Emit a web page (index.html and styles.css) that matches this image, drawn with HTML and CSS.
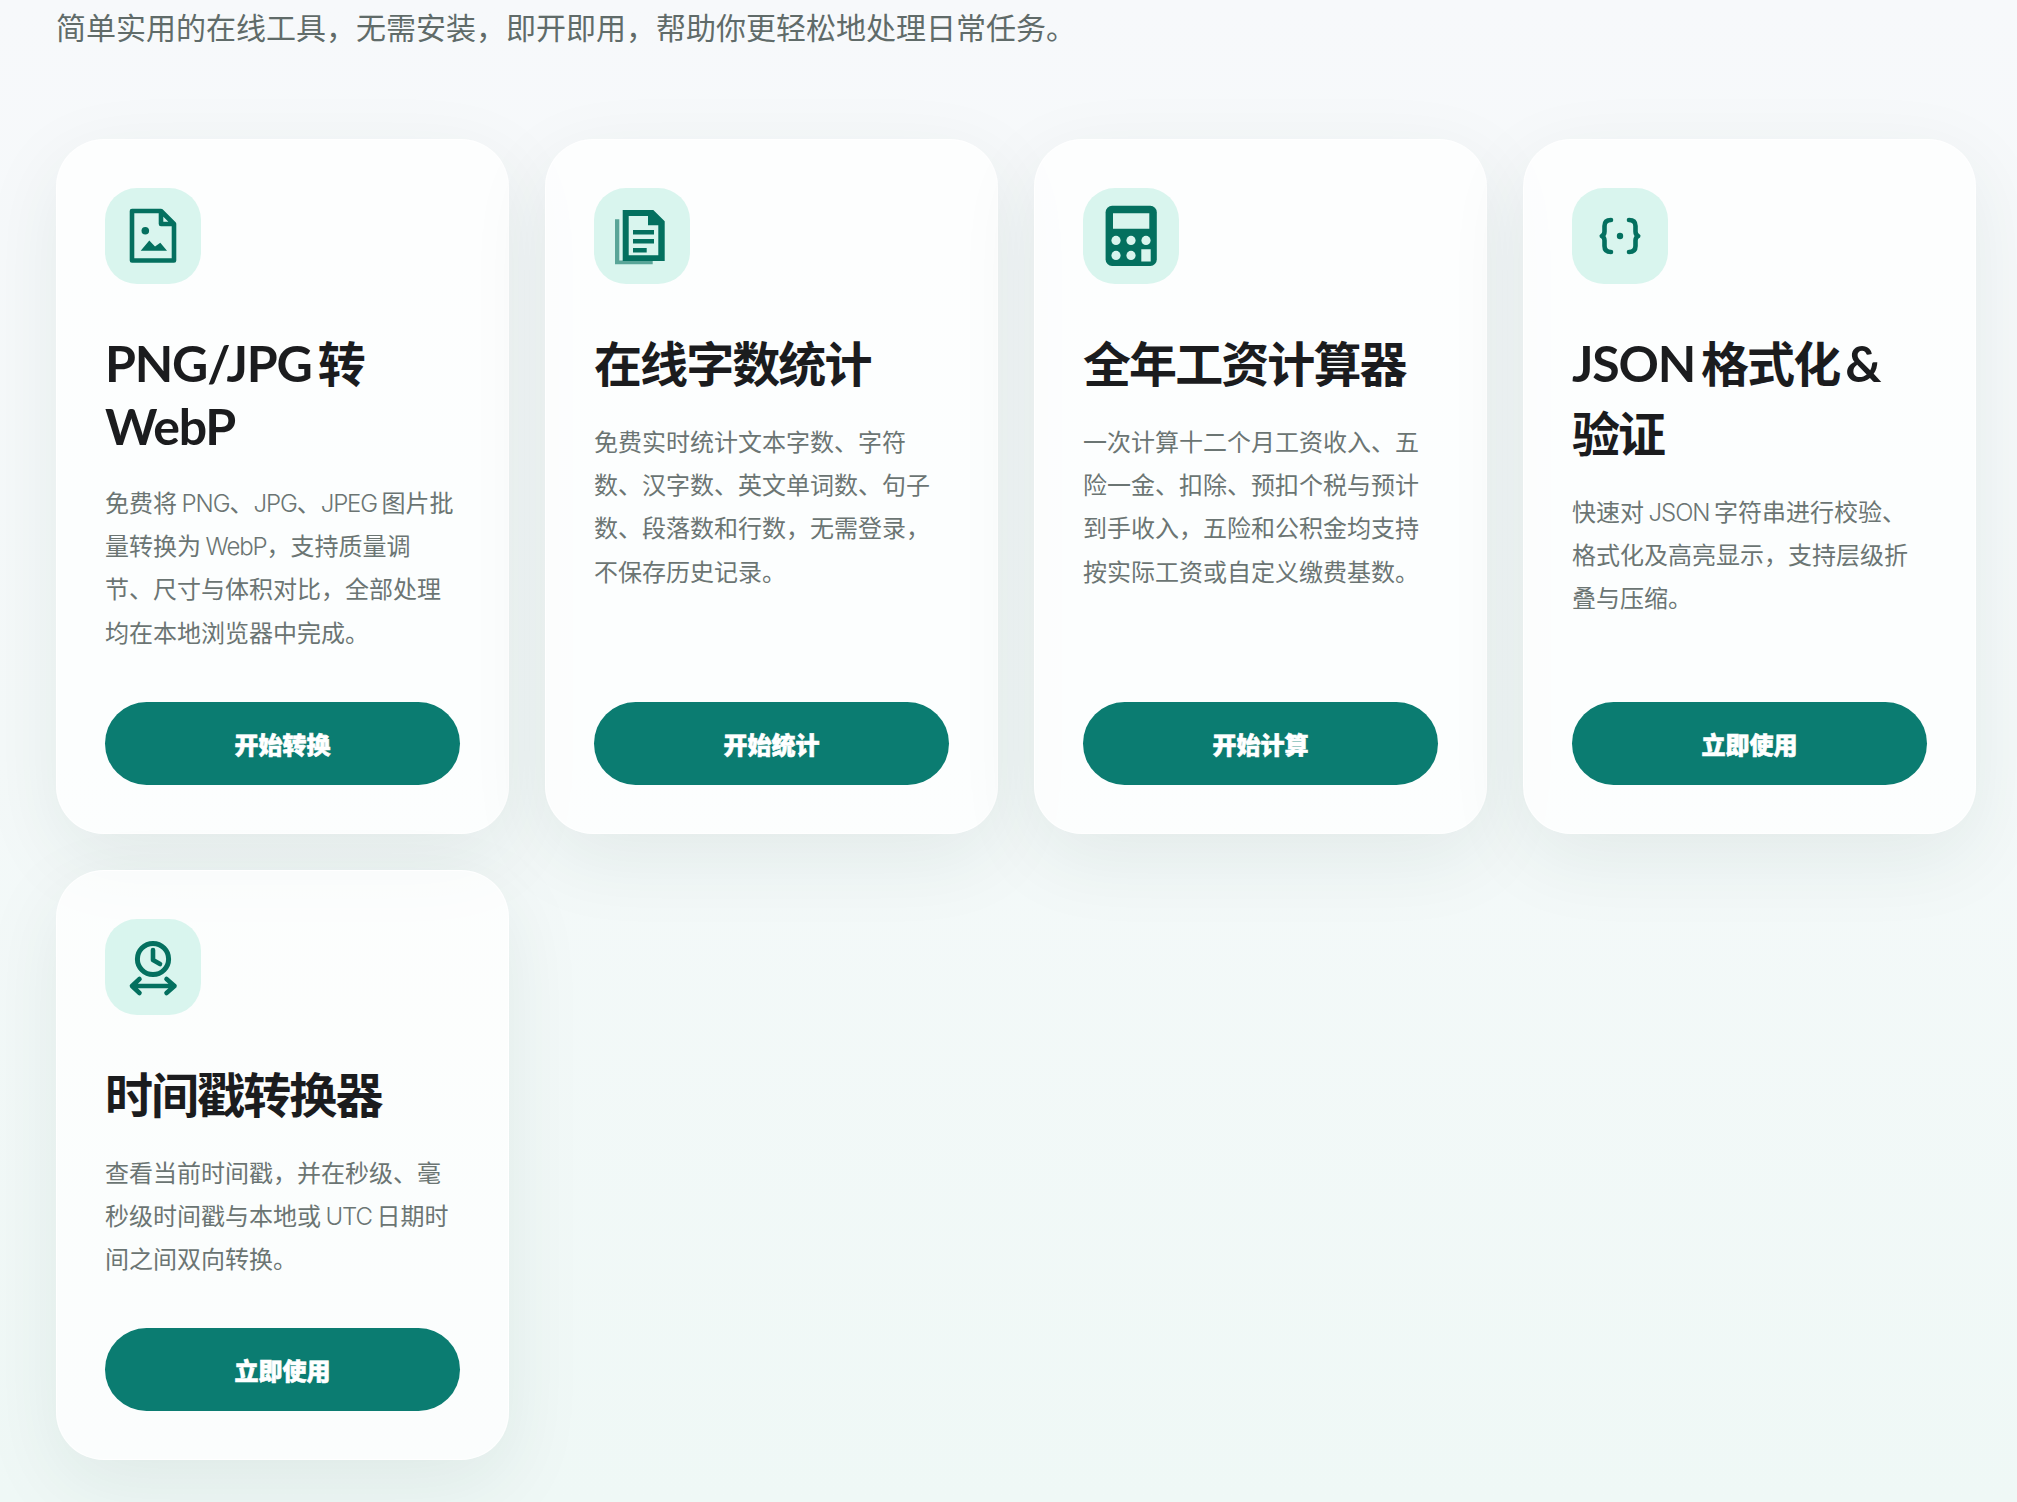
FILE: index.html
```html
<!DOCTYPE html>
<html lang="zh-CN">
<head>
  <meta charset="UTF-8" />
  <meta name="viewport" content="width=device-width, initial-scale=1.0" />
  <title>在线工具</title>
  <link rel="stylesheet" href="styles.css">
</head>
<body>

<main class="container">
  <p class="intro">简单实用的在线工具，无需安装，即开即用，帮助你更轻松地处理日常任务。</p>

  <div class="tools">
    <!-- ===== WebP ===== -->
    <article class="card">
      <div class="icon">
        <svg viewBox="0 0 96 96">
          <path class="line" d="M27 23H56L69 36V72.5H27Z M56 23V36H69"/>
          <circle cx="40.3" cy="42.7" r="3.8"/>
          <path d="M35.7 62.7L44.3 52.6L50 58.6L55.3 54.8L62 62.7Z"/>
        </svg>
      </div>
      <h2><span class="en">PNG/JPG</span> 转 <span class="en">WebP</span></h2>
      <p class="desc">免费将 <span class="en">PNG</span>、<span class="en">JPG</span>、<span class="en">JPEG</span> 图片批量转换为 <span class="en">WebP</span>，支持质量调<br>节、尺寸与体积对比，全部处理均在本地浏览器中完成。</p>
      <a class="btn" href="#">开始转换</a>
    </article>

    <!-- ===== Word count ===== -->
    <article class="card">
      <div class="icon">
        <svg viewBox="0 0 96 96">
          <path opacity=".6" d="M21 31.3H25.3V72.5H58.7V76.3H21Z"/>
          <path fill-rule="evenodd" d="M28.7 22H59.3L70.7 33.3V73H28.7Z M34.7 28V67.3H64.3V37.3H54V28Z"/>
          <path d="M39 42H60V46.6H39Z M39 51H60V55.4H39Z M39 60H52.7V64.4H39Z"/>
        </svg>
      </div>
      <h2>在线字数统计</h2>
      <p class="desc">免费实时统计文本字数、字符数、汉字数、英文单词数、句子数、段落数和行数，无需登录，不保存历史记录。</p>
      <a class="btn" href="#">开始统计</a>
    </article>

    <!-- ===== Salary ===== -->
    <article class="card">
      <div class="icon">
        <svg viewBox="0 0 96 96">
          <rect x="22.6" y="17.8" width="51.2" height="60.2" rx="6.5"/>
          <g class="hole">
            <path d="M30 25.3H66.3V40.7H30Z M58.3 61.3H67.7V73.4H58.3Z"/>
            <circle cx="33" cy="52.4" r="4.6"/>
            <circle cx="48" cy="52.4" r="4.6"/>
            <circle cx="63" cy="52.4" r="4.6"/>
            <circle cx="33" cy="67.4" r="4.6"/>
            <circle cx="48" cy="67.4" r="4.6"/>
          </g>
        </svg>
      </div>
      <h2>全年工资计算器</h2>
      <p class="desc">一次计算十二个月工资收入、五险一金、扣除、预扣个税与预计到手收入，五险和公积金均支持按实际工资或自定义缴费基数。</p>
      <a class="btn" href="#">开始计算</a>
    </article>

    <!-- ===== JSON ===== -->
    <article class="card">
      <div class="icon">
        <svg viewBox="0 0 96 96">
          <path class="line" d="M39 32C34.5 32 32.5 34 32.5 38V43.5C32.5 46 31.5 47.2 29.8 48C31.5 48.8 32.5 50 32.5 52.5V58C32.5 62 34.5 64 39 64"/>
          <path class="line" d="M57 32C61.5 32 63.5 34 63.5 38V43.5C63.5 46 64.5 47.2 66.2 48C64.5 48.8 63.5 50 63.5 52.5V58C63.5 62 61.5 64 57 64"/>
          <circle cx="48" cy="48" r="3.2"/>
        </svg>
      </div>
      <h2><span class="en">JSON</span> 格式化 <span class="en">&amp;</span> 验证</h2>
      <p class="desc">快速对 <span class="en">JSON</span> 字符串进行校验、格式化及高亮显示，支持层级折叠与压缩。</p>
      <a class="btn" href="#">立即使用</a>
    </article>

    <!-- ===== Timestamp ===== -->
    <article class="card">
      <div class="icon">
        <svg viewBox="0 0 96 96">
          <circle class="line bold" cx="48" cy="40" r="15.6"/>
          <path class="line" d="M48 31V41L55 45"/>
          <path class="line" d="M27 67H69.5M34.5 60L27 67L34.5 74M61.5 60L69.5 67L61.5 74"/>
        </svg>
      </div>
      <h2>时间戳转换器</h2>
      <p class="desc">查看当前时间戳，并在秒级、毫秒级时间戳与本地或 <span class="en">UTC</span> 日期时间之间双向转换。</p>
      <a class="btn" href="#">立即使用</a>
    </article>
  </div>
</main>

</body>
</html>
```
FILE: styles.css
```css
:root { --primary:#0b7c71; --icon:#04705f; --tint:#d9f5ee; --text:#1b1c1e; --muted:#6b7573; }
* { box-sizing:border-box; margin:0; padding:0; }
body{
  min-height:1502px;overflow:hidden;color:var(--text);
  font-family:Inter,"Noto Sans CJK SC",sans-serif;
  background:linear-gradient(180deg,#f7f9fb 0%,#f4f9f9 50%,#eff8f6 100%);
}

.container{width:1920px;margin:0 41px 0 56px;}
.intro{height:139px;padding-top:1px;font-size:30px;line-height:54px;color:#606b69;}

.tools{display:grid;grid-template-columns:repeat(4,1fr);gap:36px;}
.card{
  display:flex;flex-direction:column;padding:48px;
  border:1px solid rgba(255,255,255,.85);border-radius:48px;
  background:rgba(255,255,255,.72);box-shadow:0 24px 80px rgba(20,60,50,.08);
}

.icon{width:96px;height:96px;border-radius:32px;background:var(--tint);}
.icon svg{display:block;width:96px;height:96px;fill:var(--icon);}
.icon .line{fill:none;stroke:var(--icon);stroke-width:4.6;stroke-linecap:round;stroke-linejoin:round;}
.icon .bold{stroke-width:5;}
.icon .hole{fill:var(--tint);}

.card h2{margin-top:42px;font-size:48px;font-weight:700;letter-spacing:-1.92px;word-spacing:-3.5px;}
.card h2 .en{font-family:Lato,sans-serif;font-size:50px;line-height:61px;letter-spacing:-1.2px;}
.desc{margin-top:25px;margin-bottom:47px;font-size:24px;line-height:43.2px;word-spacing:-2.2px;color:var(--muted);}
.desc .en{font-weight:300;letter-spacing:-1.1px;}
.btn{
  display:flex;align-items:center;justify-content:center;height:83px;margin-top:auto;
  border-radius:42px;background:var(--primary);color:#fff;
  font-size:24px;font-weight:900;text-decoration:none;-webkit-text-stroke:.6px #fff;
}
```
